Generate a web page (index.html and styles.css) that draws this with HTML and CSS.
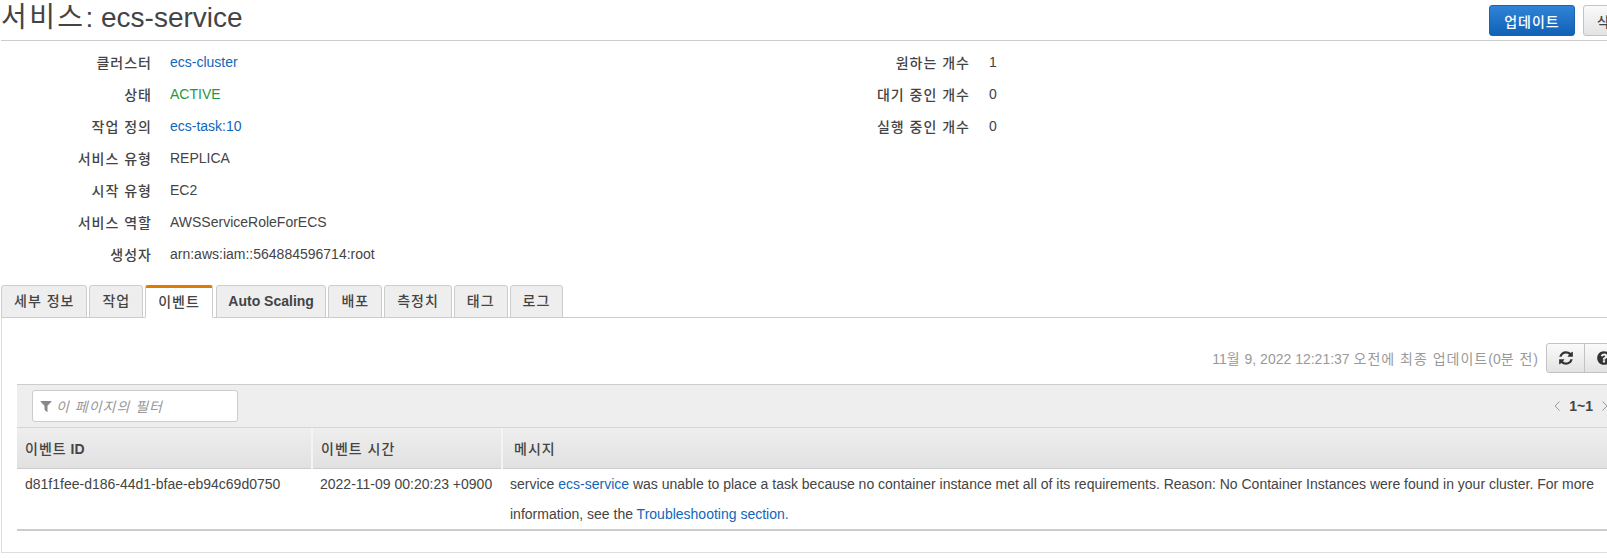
FILE: index.html
```html
<!DOCTYPE html>
<html lang="ko">
<head>
    <meta charset="UTF-8">
    <meta name="viewport" content="width=device-width, initial-scale=1.0">
    <title>서비스: ecs-service</title>
    <link rel="stylesheet" href="styles.css">
</head>
<body>
    <div class="page">
        <div class="page-header">
            <h1><span class="title-ko">서비스</span>: ecs-service</h1>
            <div class="header-actions">
                <button class="btn btn-primary">업데이트</button>
                <button class="btn">삭제</button>
            </div>
        </div>

        <div class="details">
            <div class="detail-col detail-left">
                <div class="label">클러스터</div><div><a href="#">ecs-cluster</a></div>
                <div class="label">상태</div><div class="active">ACTIVE</div>
                <div class="label">작업 정의</div><div><a href="#">ecs-task:10</a></div>
                <div class="label">서비스 유형</div><div>REPLICA</div>
                <div class="label">시작 유형</div><div>EC2</div>
                <div class="label">서비스 역할</div><div>AWSServiceRoleForECS</div>
                <div class="label">생성자</div><div>arn:aws:iam::564884596714:root</div>
            </div>
            <div class="detail-col detail-right">
                <div class="label">원하는 개수</div><div>1</div>
                <div class="label">대기 중인 개수</div><div>0</div>
                <div class="label">실행 중인 개수</div><div>0</div>
            </div>
        </div>

        <div class="tabs">
            <div class="tab">세부 정보</div>
            <div class="tab">작업</div>
            <div class="tab tab-active">이벤트</div>
            <div class="tab tab-en">Auto Scaling</div>
            <div class="tab">배포</div>
            <div class="tab">측정치</div>
            <div class="tab">태그</div>
            <div class="tab">로그</div>
        </div>

        <div class="panel">
            <div class="refresh-row">
                <span class="updated">11<span class="ko">월</span> 9, 2022 12:21:37 <span class="ko">오전에 최종 업데이트</span>(0<span class="ko">분 전</span>)</span>
                <div class="btn-group">
                    <button class="icon-btn">
                        <svg viewBox="0 0 1792 1792" width="16" height="16"><path d="M1639 1056q0 5-1 7-64 268-268 434.5t-478 166.5q-146 0-282.5-55t-243.5-157l-129 129q-19 19-45 19t-45-19-19-45v-448q0-26 19-45t45-19h448q26 0 45 19t19 45-19 45l-137 137q71 66 161 102t187 36q134 0 250-65t186-179q11-17 53-117 8-23 30-23h192q13 0 22.5 9.5t9.5 22.5zm25-800v448q0 26-19 45t-45 19h-448q-26 0-45-19t-19-45 19-45l138-138q-148-137-349-137-134 0-250 65t-186 179q-11 17-53 117-8 23-30 23h-199q-13 0-22.5-9.5t-9.5-22.5v-7q65-268 270-434.5t480-166.5q146 0 284 55.5t245 156.5l130-129q19-19 45-19t45 19 19 45z"/></svg>
                    </button>
                    <button class="icon-btn">
                        <svg viewBox="0 0 1792 1792" width="16" height="16"><path d="M1024 1376v-192q0-14-9-23t-23-9h-192q-14 0-23 9t-9 23v192q0 14 9 23t23 9h192q14 0 23-9t9-23zm256-672q0-88-55.5-163t-138.5-116-170-41q-243 0-371 213-15 24 8 42l132 100q7 6 19 6 16 0 25-12 53-68 86-92 34-24 86-24 48 0 85.5 26t37.5 59q0 38-20 61t-68 45q-63 28-115.5 86.5t-52.5 125.5v36q0 14 9 23t23 9h192q14 0 23-9t9-23q0-19 21.5-49.5t54.5-49.5q32-18 49-28.5t46-35 44.5-48 28-60.5 12.5-81zm384 192q0 209-103 385.5t-279.5 279.5-385.5 103-385.5-103-279.5-279.5-103-385.5 103-385.5 279.5-279.5 385.5-103 385.5 103 279.5 279.5 103 385.5z"/></svg>
                    </button>
                </div>
            </div>

            <div class="table-wrap">
                <div class="toolbar">
                    <div class="filter">
                        <svg viewBox="0 0 1792 1792" width="14" height="14"><path d="M1595 295q17 41-14 70l-493 493v742q0 42-39 59-13 5-25 5-27 0-45-19l-256-256q-19-19-19-45v-486l-493-493q-31-29-14-70 17-39 59-39h1280q42 0 59 39z"/></svg>
                        <span>이 페이지의 필터</span>
                    </div>
                    <div class="pager">
                        <svg viewBox="0 0 8 12" width="8" height="12"><path d="M6.5 1.5 2 6l4.500 4.500"/></svg>
                        <b>1~1</b>
                        <svg viewBox="0 0 8 12" width="8" height="12"><path d="M1.500 1.500 6 6l-4.500 4.500"/></svg>
                    </div>
                </div>
                <table>
                    <thead>
                        <tr>
                            <th class="col-id"><span class="ko">이벤트</span> <b>ID</b></th>
                            <th class="col-time"><span class="ko">이벤트 시간</span></th>
                            <th class="col-message"><span class="ko">메시지</span></th>
                        </tr>
                    </thead>
                    <tbody>
                        <tr>
                            <td>d81f1fee-d186-44d1-bfae-eb94c69d0750</td>
                            <td>2022-11-09 00:20:23 +0900</td>
                            <td>service <a href="#">ecs-service</a> was unable to place a task because no container instance met all of its requirements. Reason: No Container Instances were found in your cluster. For more information, see the <a href="#">Troubleshooting section.</a></td>
                        </tr>
                    </tbody>
                </table>
            </div>
        </div>
    </div>
</body>
</html>
```

FILE: styles.css
```css
html, body {
    margin: 0;
    padding: 0;
    height: 558px;
    overflow: hidden;
    background: #fff;
}
body {
    font-family: "Liberation Sans", "Noto Sans CJK KR", sans-serif;
    font-size: 14px;
    color: #444;
}
a {
    color: #1166bb;
    text-decoration: none;
}
.ko {
    letter-spacing: 1px;
}
.page {
    width: 1639px;
}

/* header */
.page-header {
    display: flex;
    justify-content: space-between;
    height: 40px;
    margin-left: 1px;
    border-bottom: 1px solid #ccc;
}
h1 {
    margin: 0;
    font-size: 28px;
    font-weight: normal;
    line-height: 36px;
}
.title-ko {
    letter-spacing: 2.4px;
}
.header-actions {
    display: flex;
    gap: 8px;
    padding: 5px 0 0;
    height: 31px;
}
.btn {
    width: 86px;
    height: 31px;
    padding: 0;
    font-family: inherit;
    font-size: 14px;
    font-weight: 500;
    letter-spacing: 1px;
    color: #444;
    background: linear-gradient(#fafafa, #e3e3e3);
    border: 1px solid #c3c3c3;
    border-radius: 3px;
}
.header-actions .btn:last-child {
    width: 56px;
}
.btn-primary {
    color: #fff;
    background: linear-gradient(#2f84d8, #1161b5);
    border-color: #1a62ad;
}

/* details */
.details {
    display: flex;
    padding-top: 5px;
    height: 224px;
}
.detail-col {
    display: grid;
    grid-auto-rows: 32px;
    align-items: center;
    align-content: start;
}
.detail-left {
    width: 650px;
    grid-template-columns: 152px 1fr;
    column-gap: 18px;
}
.detail-right {
    grid-template-columns: 320px 1fr;
    column-gap: 19px;
}
.label {
    text-align: right;
    font-weight: 500;
    letter-spacing: 1px;
}
.active {
    color: #1d9a3f;
}

/* tabs */
.tabs {
    display: flex;
    gap: 2px;
    height: 32px;
    margin-top: 15px;
    padding-left: 1px;
}
.tab {
    box-sizing: border-box;
    height: 33px;
    padding: 0 12px;
    line-height: 31px;
    text-align: center;
    font-weight: 500;
    letter-spacing: 1px;
    background: #eee;
    border: 1px solid #ccc;
    border-radius: 3px 3px 0 0;
}
.tab-en {
    margin-left: 1px;
    padding: 0 11.5px;
    font-weight: bold;
    letter-spacing: 0;
}
.tab-active {
    background: #fff;
    border-top: 3px solid #e07b00;
    border-bottom-color: #fff;
    line-height: 29px;
    position: relative;
    z-index: 1;
}

/* panel */
.panel {
    box-sizing: border-box;
    height: 236px;
    margin-left: 1px;
    padding: 25px 15px 0;
    border: 1px solid #ddd;
    border-top-color: #ccc;
}
.refresh-row {
    display: flex;
    justify-content: flex-end;
    align-items: center;
    gap: 9px;
    height: 30px;
}
.updated {
    color: #999;
}
.btn-group {
    display: flex;
}
.icon-btn {
    box-sizing: border-box;
    width: 39px;
    height: 30px;
    padding: 0;
    display: flex;
    align-items: center;
    justify-content: center;
    background: linear-gradient(#fafafa, #e3e3e3);
    border: 1px solid #c3c3c3;
    margin-left: -1px;
}
.icon-btn:first-child {
    border-radius: 3px 0 0 3px;
}
.icon-btn svg {
    fill: #333;
}

/* table */
.table-wrap {
    margin-top: 11px;
    border-top: 1px solid #ccc;
}
.toolbar {
    display: flex;
    justify-content: space-between;
    align-items: center;
    height: 42px;
    background: #eee;
    border-bottom: 1px solid #d5d5d5;
    padding: 0 15px;
}
.filter {
    box-sizing: border-box;
    width: 206px;
    height: 32px;
    display: flex;
    align-items: center;
    gap: 3px;
    padding-left: 6px;
    background: #fff;
    border: 1px solid #ccc;
    border-radius: 3px;
    color: #999;
    font-style: italic;
    letter-spacing: 1px;
}
.filter svg {
    fill: #888;
}
.pager {
    display: flex;
    align-items: center;
    gap: 8px;
    margin-right: -1px;
}
.pager svg {
    fill: none;
    stroke: #999;
    stroke-width: 1;
}
table {
    width: 100%;
    border-collapse: collapse;
    table-layout: fixed;
}
th {
    height: 40px;
    padding: 0 8px;
    text-align: left;
    font-weight: 500;
    background: linear-gradient(#eee, #e1e1e1);
    border-bottom: 1px solid #ccc;
    border-right: 2px solid #f4f4f4;
}
.col-id {
    width: 278px;
}
.col-time {
    width: 172px;
}
.col-message {
    padding-left: 11px;
}
td {
    padding: 0 8px;
    line-height: 30px;
    vertical-align: top;
    border-bottom: 2px solid #ccc;
}
```
